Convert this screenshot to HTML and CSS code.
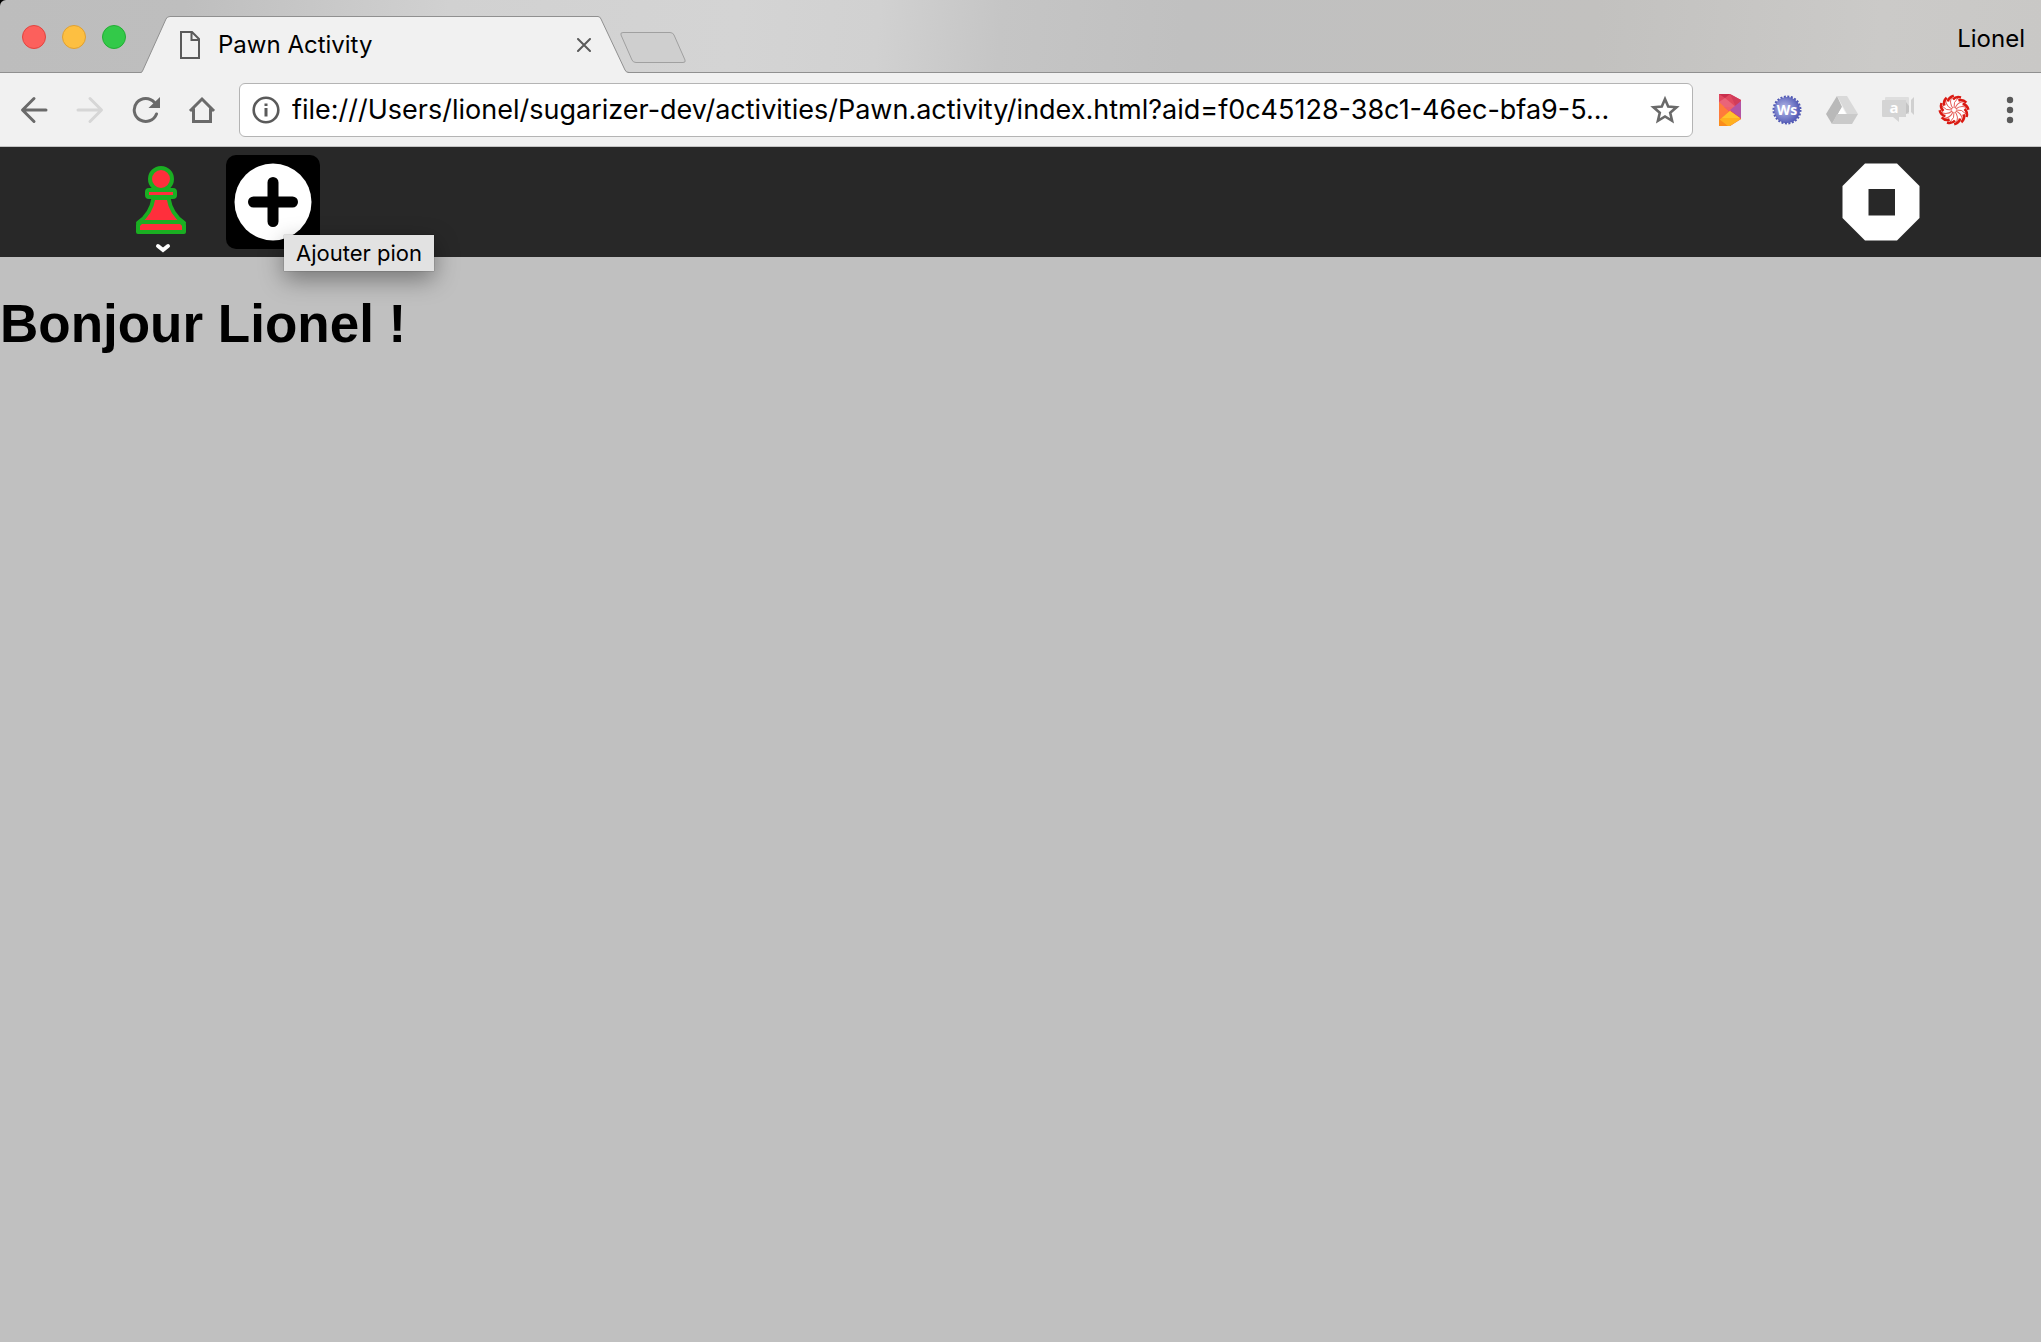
FILE: index.html
```html
<!DOCTYPE html>
<html lang="fr">
<head>
<meta charset="utf-8">
<title>Pawn Activity</title>
<link rel="stylesheet" href="styles.css">
</head>
<body>
<header class="browser">
  <div class="tabstrip">
    <div class="lights">
      <button class="light close" aria-label="Fermer"></button>
      <button class="light minimize" aria-label="Réduire"></button>
      <button class="light expand" aria-label="Agrandir"></button>
    </div>
    <div class="tab">
      <svg class="tab-shape" viewBox="0 0 488 57" aria-hidden="true"><path d="M0 57V56.5Q1 56.5 2 54L25 3Q26 .5 29 .5H457Q459 .5 460 3L484 54Q485 56.5 487 56.5V57Z" fill="#f1f1f1"/><path d="M0 56.5Q1 56.5 2 54L25 3Q26 .5 29 .5H457Q459 .5 460 3L484 54Q485 56.5 488 56.5" fill="none" stroke="#909090"/></svg>
      <svg class="page-icon" viewBox="0 0 20 28" aria-hidden="true"><path d="M1 1H12L19 8V27H1ZM11.500 1V9H19" fill="none" stroke="#5a5a5a" stroke-width="2"/></svg>
      <span class="tab-title">Pawn Activity</span>
      <button class="tab-close" aria-label="Fermer l’onglet"><svg width="14" height="14" viewBox="0 0 14 14"><path d="M1 1L13 13M13 1L1 13" stroke="#5a5a5a" stroke-width="2" stroke-linecap="round"/></svg></button>
    </div>
    <button class="new-tab" aria-label="Nouvel onglet"><svg width="66" height="32" viewBox="0 0 66 32"><path d="M3 .5H50Q53 .5 54 3L65 28Q66 30.500 63 30.500H16Q13 30.500 12 28L1 3Q0 .5 3 .5Z" fill="#cfcfcf" stroke="#a0a0a0"/></svg></button>
    <button class="profile">Lionel</button>
  </div>
  <nav class="toolbar">
    <button class="tool" aria-label="Retour"><svg width="28" height="28" viewBox="0 0 28 28"><path d="M26 14H3M14 2.500L2.500 14L14 25.500" fill="none" stroke="#6a6a6a" stroke-width="3" stroke-linecap="round" stroke-linejoin="round"/></svg></button>
    <button class="tool" aria-label="Avancer" disabled><svg width="28" height="28" viewBox="0 0 28 28"><path d="M2 14H25M14 2.500L25.500 14L14 25.500" fill="none" stroke="#d6d6d6" stroke-width="3" stroke-linecap="round" stroke-linejoin="round"/></svg></button>
    <button class="tool" aria-label="Actualiser"><svg width="28" height="28" viewBox="0 0 28 28"><path d="M24.500 18A11.500 11.500 0 1 1 22.500 6.500" fill="none" stroke="#6a6a6a" stroke-width="3" stroke-linecap="round"/><path d="M28 1V12H16.500Z" fill="#6a6a6a"/></svg></button>
    <button class="tool" aria-label="Accueil"><svg width="28" height="28" viewBox="0 0 28 28"><path d="M2 15L14 3L26 15M5.500 12.500V25.500H22.500V12.500" fill="none" stroke="#6a6a6a" stroke-width="3"/></svg></button>
    <form class="omnibox">
      <svg class="info" viewBox="0 0 28 28" aria-hidden="true"><circle cx="14" cy="14" r="12.300" fill="none" stroke="#5a5a5a" stroke-width="2.600"/><path d="M12.500 7.500H15.500V10H12.500ZM12.500 12H15.500V20.500H12.500Z" fill="#5a5a5a"/></svg>
      <input class="url" type="text" aria-label="Adresse" value="file:///Users/lionel/sugarizer-dev/activities/Pawn.activity/index.html?aid=f0c45128-38c1-46ec-bfa9-5...">
      <button class="star" type="button" aria-label="Favori"><svg width="30" height="30" viewBox="0 0 30 30"><path d="M15 4L18.200 11.600L26.500 12.300L20.200 17.700L22.100 25.800L15 21.500L7.900 25.800L9.800 17.700L3.500 12.300L11.800 11.600Z" fill="none" stroke="#6a6a6a" stroke-width="2.600"/></svg></button>
    </form>
    <button class="tool" aria-label="Extension Dashlane"><svg width="32" height="32" viewBox="0 0 32 32"><path d="M5 0H16L27 6V25L16 32H5Z" fill="#e0485f"/><path d="M5 0H16L11 4Z" fill="#c92f4c"/><path d="M11 4L22 13H5V8Z" fill="#ea6478"/><path d="M16 0L27 6L22 13Z" fill="#d23c5a"/><path d="M5 8L16 18L5 26Z" fill="#ff7b3b"/><path d="M10 13H22L16 18Z" fill="#f0606a"/><path d="M27 7V24L16 16Z" fill="#b254a5"/><path d="M16 17L27 25L16 32H5V26Z" fill="#ffb01f"/><path d="M5 25L14 32H5Z" fill="#fb8c1c"/><path d="M16 17L26 24L8 24Z" fill="#ffc42b"/></svg></button>
    <button class="tool" aria-label="Extension Ws"><svg width="32" height="32" viewBox="0 0 32 32"><defs><radialGradient id="ws" cx=".4" cy=".45" r=".65"><stop offset="0" stop-color="#b8bcea"/><stop offset="1" stop-color="#4850b0"/></radialGradient></defs><circle cx="17" cy="16" r="13" fill="url(#ws)"/><circle cx="17" cy="16" r="13.500" fill="none" stroke="#5058b4" stroke-width="2" stroke-dasharray="2 1.530"/><text x="17" y="21" text-anchor="middle" class="ws-text">Ws</text></svg></button>
    <button class="tool" aria-label="Google Drive"><svg width="32" height="32" viewBox="0 0 32 32"><path d="M11 2L0 20L6 30L16 13Z" fill="#b9b9b9"/><path d="M11 2H21L32 20H21Z" fill="#d9d9d9"/><path d="M11 20H32L26 30H6Z" fill="#cacaca"/><path d="M16 13L20 20H12Z" fill="#fff"/></svg></button>
    <button class="tool" aria-label="Appear.in"><svg width="32" height="32" viewBox="0 0 32 32"><path d="M3 4Q3 3 4 3H26Q27 3 27 4V20H3Z" fill="#dedede"/><path d="M1 6H24V23H17V28L11 23H1Q0 23 0 22V7Q0 6 1 6Z" fill="#d4d4d4"/><path d="M24 8L27 12V18L24 20Z" fill="#c4c4c4"/><path d="M29 6L32 3V21L29 18Z" fill="#d0d0d0"/><text x="12" y="19" text-anchor="middle" class="chat-text">a</text></svg></button>
    <button class="tool" aria-label="Extension spirale"><svg width="32" height="32" viewBox="-16 -16 32 32"><defs><g id="arm" fill="none" stroke="#da1a12"><path d="M0-2Q-1-8 4-12" stroke-width="1" stroke-opacity=".7"/><path d="M-1-10.500Q2-14 7-12.500" stroke-width="2.600"/></g></defs><circle r="12" fill="#fff"/><use href="#arm"/><use href="#arm" transform="rotate(30)"/><use href="#arm" transform="rotate(60)"/><use href="#arm" transform="rotate(90)"/><use href="#arm" transform="rotate(120)"/><use href="#arm" transform="rotate(150)"/><use href="#arm" transform="rotate(180)"/><use href="#arm" transform="rotate(210)"/><use href="#arm" transform="rotate(240)"/><use href="#arm" transform="rotate(270)"/><use href="#arm" transform="rotate(300)"/><use href="#arm" transform="rotate(330)"/></svg></button>
    <button class="tool" aria-label="Menu"><svg width="8" height="28" viewBox="0 0 8 28"><g fill="#5a5a5a"><circle cx="4" cy="4" r="3.200"/><circle cx="4" cy="14" r="3.200"/><circle cx="4" cy="24" r="3.200"/></g></svg></button>
  </nav>
</header>
<div class="activity-bar">
  <button class="action" aria-label="Activité Pawn"><svg width="94" height="110" viewBox="0 0 94 110"><g fill="#ff2f3c" stroke="#1aae22" stroke-width="4" stroke-linejoin="round"><circle cx="47" cy="32" r="11"/><rect x="33" y="43" width="28" height="7" rx="2"/><path d="M39.500 51H54.500Q57 67 70 76H24Q37 67 39.500 51Z"/><path d="M27 75H67L70 78V85H24V78Z"/></g><path d="M44 99L49 103L54 99" fill="none" stroke="#fff" stroke-width="4" stroke-linecap="round"/></svg></button>
  <div class="with-tip">
    <button class="action selected" aria-describedby="tip-add" aria-label="Ajouter pion"><svg width="94" height="94" viewBox="0 0 94 94"><circle cx="47" cy="47" r="38.500" fill="#fff"/><path d="M47 27.500V66.500M27.500 47H66.500" stroke="#000" stroke-width="11" stroke-linecap="round"/></svg></button>
    <span class="tip" role="tooltip" id="tip-add">Ajouter pion</span>
  </div>
  <button class="action stop" aria-label="Arrêter"><svg width="94" height="94" viewBox="0 0 94 94"><path d="M31 8.500H63L85.500 31V63L63 85.500H31L8.500 63V31Z" fill="#fff"/><path d="M34.500 34H61V60.500H34.500Z" fill="#282828"/></svg></button>
</div>
<main class="canvas">
  <h1 class="greeting">Bonjour Lionel !</h1>
</main>
</body>
</html>
```
FILE: styles.css
```css
* { box-sizing: border-box; }
body {
  margin: 0;
  min-height: 100vh;
  background: #c0c0c0;
  color: #000;
  font-family: Inter, "Liberation Sans", sans-serif;
}
button {
  margin: 0;
  padding: 0;
  border: 0;
  background: none;
  color: inherit;
  font: inherit;
}
svg { display: block; }

.browser { background: #000; }
.tabstrip {
  display: flex;
  align-items: flex-start;
  height: 73px;
  padding: 0 16px 0 22px;
  border-bottom: 1px solid #909090;
  border-top-left-radius: 6px;
  background: linear-gradient(95deg, #bdbdbd 0%, #bebebe 9%, #d1d1d1 22%, #d4d4d4 36%, #d1d1d1 43%, #c5c5c5 49%, #c0c0c0 58%, #c2c1bf 78%, #cbcac8 92%, #c9c8c6 100%);
}
.lights {
  display: flex;
  gap: 16px;
  margin-top: 25px;
}
.light {
  width: 24px;
  height: 24px;
  border: 1px solid;
  border-radius: 50%;
}
.close { background: #fc605c; border-color: #e2443f; }
.minimize { background: #fdbf41; border-color: #dfa033; }
.expand { background: #33c949; border-color: #23ae34; }

.tab {
  position: relative;
  display: flex;
  align-items: center;
  width: 488px;
  height: 57px;
  margin: 16px 0 0 15px;
  padding: 0 38px 0 39px;
}
.tab-shape {
  position: absolute;
  inset: 0;
  width: 488px;
  height: 57px;
}
.page-icon, .tab-title, .tab-close { position: relative; }
.page-icon { width: 20px; height: 28px; }
.tab-title {
  flex: 1;
  margin-left: 18px;
  font-size: 24px;
  line-height: 28px;
}
.new-tab { margin: 32px 0 0 -9px; }
.profile {
  margin: 25px 0 0 auto;
  font-size: 24px;
  line-height: 28px;
}

.toolbar {
  display: flex;
  align-items: center;
  height: 74px;
  padding: 0 3px 0 6px;
  border-bottom: 1px solid #c4c4c4;
  background: #f1f1f1;
}
.tool {
  display: flex;
  align-items: center;
  justify-content: center;
  flex: none;
  width: 56px;
  height: 56px;
}
.omnibox {
  display: flex;
  align-items: center;
  flex: 1;
  min-width: 0;
  height: 54px;
  margin: 0 9px;
  padding: 0 12px;
  border: 1px solid #b4b4b4;
  border-radius: 6px;
  background: #fff;
}
.info { flex: none; width: 28px; height: 28px; }
.url {
  flex: 1;
  min-width: 0;
  margin: 0 12px;
  padding: 0;
  border: 0;
  outline: 0;
  background: none;
  color: #000;
  font: 27px/36px Inter, "Liberation Sans", sans-serif;
}
.ws-text { fill: #fff; font: 700 14px "Open Sans", sans-serif; }
.chat-text { fill: #fff; font: 700 15px "Open Sans", sans-serif; }

.activity-bar {
  display: flex;
  align-items: center;
  gap: 18px;
  height: 110px;
  padding: 0 113px 0 114px;
  background: #282828;
}
.action { display: block; border-radius: 10px; }
.selected { background: #000; }
.stop { margin-left: auto; }
.with-tip { position: relative; }
.tip {
  position: absolute;
  top: 80px;
  left: 58px;
  padding: 4px 12px;
  background: #e2e2e2;
  box-shadow: 0 0 1px rgba(0, 0, 0, .5), 0 8px 24px rgba(0, 0, 0, .4);
  font-size: 22px;
  line-height: 28px;
  white-space: nowrap;
}

.greeting {
  margin: 0;
  padding-top: 35px;
  font: 700 53px/64px "Liberation Sans", sans-serif;
}
```
